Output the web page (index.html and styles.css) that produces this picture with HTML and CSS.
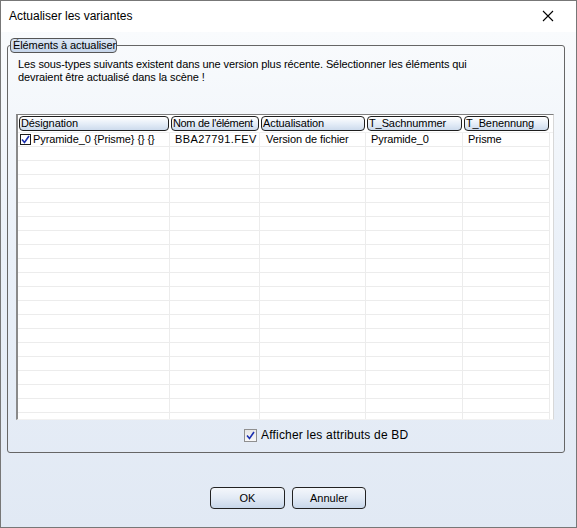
FILE: index.html
```html
<!DOCTYPE html>
<html lang="fr">
<head>
<meta charset="utf-8">
<title>Actualiser les variantes</title>
<link rel="stylesheet" href="styles.css">
</head>
<body>
<div class="window">
  <div class="titlebar">
    <span class="title">Actualiser les variantes</span>
    <svg class="close" width="12" height="12" viewBox="0 0 12 12"><path d="M1 1 L11 11 M11 1 L1 11" stroke="#000" stroke-width="1.1" fill="none"/></svg>
  </div>
  <div class="client">
    <div class="group">
      <div class="legend">Éléments à actualiser</div>
      <p class="intro">Les sous-types suivants existent dans une version plus récente. Sélectionner les éléments qui<br>devraient être actualisé dans la scène !</p>
      <div class="table">
        <div class="thead">
          <div class="th first">Désignation</div>
          <div class="th tight">Nom de l'élément</div>
          <div class="th">Actualisation</div>
          <div class="th">T_Sachnummer</div>
          <div class="th">T_Benennung</div>
        </div>
        <div class="tbody">
          <div class="row">
            <div class="td first"><span class="cb"><svg width="9" height="9" viewBox="0 0 9 9"><path d="M1 4.5 L3.5 7.5 L8 1" stroke="#1a2fb0" stroke-width="1.6" fill="none"/></svg></span>Pyramide_0 {Prisme} {} {}</div>
            <div class="td wide">BBA27791.FEV</div>
            <div class="td pad6">Version de fichier</div>
            <div class="td">Pyramide_0</div>
            <div class="td">Prisme</div>
          </div>
          <div class="row"><div class="td"></div><div class="td"></div><div class="td"></div><div class="td"></div><div class="td"></div></div>
          <div class="row"><div class="td"></div><div class="td"></div><div class="td"></div><div class="td"></div><div class="td"></div></div>
          <div class="row"><div class="td"></div><div class="td"></div><div class="td"></div><div class="td"></div><div class="td"></div></div>
          <div class="row"><div class="td"></div><div class="td"></div><div class="td"></div><div class="td"></div><div class="td"></div></div>
          <div class="row"><div class="td"></div><div class="td"></div><div class="td"></div><div class="td"></div><div class="td"></div></div>
          <div class="row"><div class="td"></div><div class="td"></div><div class="td"></div><div class="td"></div><div class="td"></div></div>
          <div class="row"><div class="td"></div><div class="td"></div><div class="td"></div><div class="td"></div><div class="td"></div></div>
          <div class="row"><div class="td"></div><div class="td"></div><div class="td"></div><div class="td"></div><div class="td"></div></div>
          <div class="row"><div class="td"></div><div class="td"></div><div class="td"></div><div class="td"></div><div class="td"></div></div>
          <div class="row"><div class="td"></div><div class="td"></div><div class="td"></div><div class="td"></div><div class="td"></div></div>
          <div class="row"><div class="td"></div><div class="td"></div><div class="td"></div><div class="td"></div><div class="td"></div></div>
          <div class="row"><div class="td"></div><div class="td"></div><div class="td"></div><div class="td"></div><div class="td"></div></div>
          <div class="row"><div class="td"></div><div class="td"></div><div class="td"></div><div class="td"></div><div class="td"></div></div>
          <div class="row"><div class="td"></div><div class="td"></div><div class="td"></div><div class="td"></div><div class="td"></div></div>
          <div class="row"><div class="td"></div><div class="td"></div><div class="td"></div><div class="td"></div><div class="td"></div></div>
          <div class="row"><div class="td"></div><div class="td"></div><div class="td"></div><div class="td"></div><div class="td"></div></div>
          <div class="row"><div class="td"></div><div class="td"></div><div class="td"></div><div class="td"></div><div class="td"></div></div>
          <div class="row"><div class="td"></div><div class="td"></div><div class="td"></div><div class="td"></div><div class="td"></div></div>
          <div class="row"><div class="td"></div><div class="td"></div><div class="td"></div><div class="td"></div><div class="td"></div></div>
          <div class="row"><div class="td"></div><div class="td"></div><div class="td"></div><div class="td"></div><div class="td"></div></div>
          <div class="row"><div class="td"></div><div class="td"></div><div class="td"></div><div class="td"></div><div class="td"></div></div>
        </div>
      </div>
      <label class="option"><span class="cb cb-gray"><svg width="9" height="9" viewBox="0 0 9 9"><path d="M1 4.5 L3.5 7.5 L8 1" stroke="#1a2fb0" stroke-width="1.6" fill="none"/></svg></span>Afficher les attributs de BD</label>
    </div>
    <div class="buttons">
      <button class="btn ok">OK</button>
      <button class="btn cancel">Annuler</button>
    </div>
  </div>
</div>
</body>
</html>
```

FILE: styles.css
```css
* { box-sizing: border-box; }
html, body { margin: 0; padding: 0; }
body {
  width: 577px;
  height: 528px;
  font-family: "Liberation Sans", Arial, sans-serif;
  font-size: 11px;
  letter-spacing: -0.1px;
  color: #000;
  overflow: hidden;
}
.window {
  width: 577px;
  height: 528px;
  border: 1px solid #777;
  display: flex;
  flex-direction: column;
  background: #fff;
}
.titlebar {
  height: 31px;
  flex: none;
  display: flex;
  align-items: center;
  justify-content: space-between;
  padding: 0 22px 1px 8px;
  background: #fff;
}
.title {
  font-family: "Liberation Sans", Arial, sans-serif;
  font-size: 12px;
  letter-spacing: 0;
}
.close { display: block; }
.client {
  flex: 1;
  background: linear-gradient(to bottom, #f9fbfd 0%, #eaf0f8 45%, #e1e9f4 100%);
  padding: 13px 0 0 6px;
  display: flex;
  flex-direction: column;
}
.group {
  width: 558px;
  height: 408px;
  border: 1px solid #666;
  border-radius: 3px;
  padding: 0 0 0 8px;
  display: flex;
  flex-direction: column;
}
.legend {
  align-self: flex-start;
  margin: -8px 0 0 -6px;
  height: 15px;
  width: 107px;
  line-height: 13px;
  padding-left: 2px;
  border: 1px solid #555;
  border-radius: 4px;
  background: linear-gradient(to bottom, #dbe6f4, #c6d6eb);
  white-space: nowrap;
}
.intro {
  margin: 5px 0 0 2px;
  line-height: 13px;
}
.table {
  margin-top: 30px;
  width: 538px;
  height: 306px;
  flex: none;
  background: #fff;
  border-top: 1px solid #7e7e7e;
  border-left: 2px solid #8a8a8a;
  border-right: 1px solid #d8d8d8;
  border-bottom: 1px solid #f2f2f2;
  overflow: hidden;
}
.thead, .row {
  display: grid;
  grid-template-columns: 152px 90px 106px 97px 87px;
}
.thead {
  height: 18px;
  padding-top: 1px;
  border-bottom: 1px solid #f0f0f0;
}
.th {
  height: 15px;
  margin: 0 1px 0 1px;
  border: 1px solid #1e1e1e;
  border-radius: 4px;
  background: linear-gradient(to bottom, #ffffff 0%, #e6eef8 50%, #cddbed 100%);
  line-height: 13px;
  padding-left: 1px;
  white-space: nowrap;
  overflow: hidden;
}
.th.first { margin-left: 1px; }
.th.tight { letter-spacing: -0.35px; }
.row { height: 14px; }
.td {
  height: 14px;
  border-bottom: 1px solid #ececec;
  border-right: 1px solid #ececec;
  line-height: 13px;
  padding-left: 5px;
  white-space: nowrap;
  display: flex;
  align-items: center;
}
.td.pad6 { padding-left: 6px; }
.td.wide { letter-spacing: 0.4px; }
.td.first { padding-left: 2px; }
.cb {
  width: 11px;
  height: 11px;
  border: 1px solid #1c1c1c;
  background: #fff;
  display: inline-flex;
  align-items: center;
  justify-content: center;
  margin-right: 2px;
  flex: none;
}
.cb svg { display: block; }
.option {
  display: flex;
  align-items: center;
  margin: 8px 0 0 228px;
  height: 14px;
  font-size: 12px;
  letter-spacing: 0.2px;
}
.cb-gray {
  width: 13px;
  height: 13px;
  border: 1px solid #8f8f8f;
  background: linear-gradient(to bottom, #e6e6e6, #f8f8f8);
  margin-right: 4px;
}
.buttons {
  display: flex;
  gap: 7px;
  margin: 34px 0 0 203px;
}
.btn {
  height: 22px;
  border: 1px solid #222;
  border-radius: 4px;
  background: linear-gradient(to bottom, #f4f7fb 0%, #e2eaf5 50%, #c8d7ea 100%);
  font-family: "Liberation Sans", Arial, sans-serif;
  font-size: 11px;
  color: #000;
  padding: 0;
}
.ok { width: 75px; }
.cancel { width: 74px; }
```
